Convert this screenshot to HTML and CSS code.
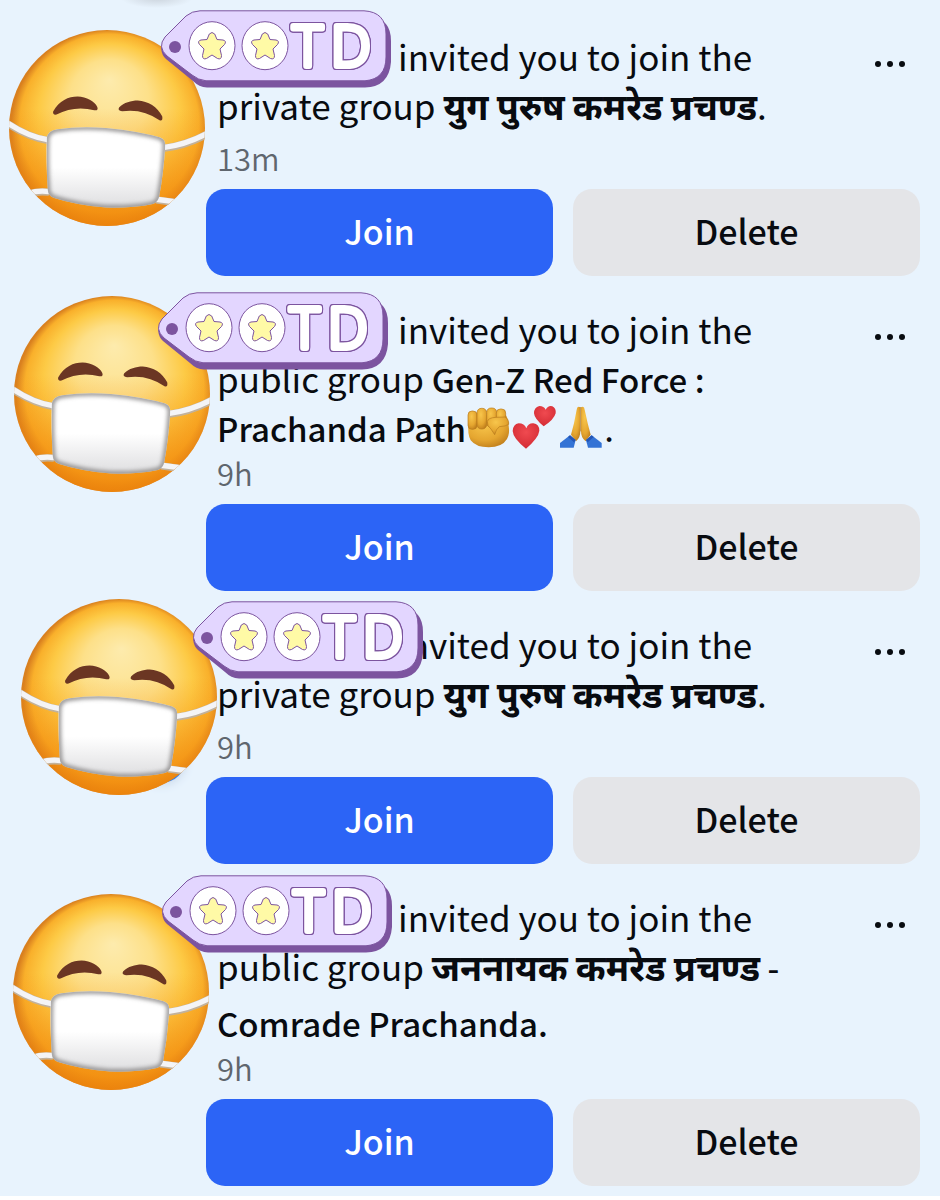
FILE: index.html
```html
<!DOCTYPE html>
<html lang="en">
<head>
<meta charset="utf-8">
<meta name="viewport" content="width=device-width, initial-scale=1">
<title>Group invitations</title>
<link rel="stylesheet" href="styles.css">
</head>
<body>
<svg class="defs" aria-hidden="true">
  <defs>
    <radialGradient id="skin" gradientUnits="userSpaceOnUse" cx="330" cy="385" r="294" fx="330" fy="240">
      <stop offset="0" stop-color="#fdebad"/>
      <stop offset=".4" stop-color="#fde089"/>
      <stop offset=".72" stop-color="#fdca45"/>
      <stop offset=".91" stop-color="#f9b02b"/>
      <stop offset="1" stop-color="#d9801f"/>
    </radialGradient>
    <linearGradient id="chin" x1="0" y1="0" x2="0" y2="1">
      <stop offset=".4" stop-color="#f58a0c" stop-opacity="0"/>
      <stop offset="1" stop-color="#f08408" stop-opacity=".8"/>
    </linearGradient>
    <linearGradient id="cloth" x1="0" y1="0" x2="0" y2="1">
      <stop offset=".5" stop-color="#fff"/>
      <stop offset="1" stop-color="#dedee0"/>
    </linearGradient>
    <radialGradient id="gold" cx=".4" cy=".3" r=".8">
      <stop offset="0" stop-color="#f8c64c"/>
      <stop offset=".6" stop-color="#e5a630"/>
      <stop offset="1" stop-color="#b97718"/>
    </radialGradient>
    <radialGradient id="rose" cx=".5" cy=".35" r=".75">
      <stop offset="0" stop-color="#f04a50"/>
      <stop offset="1" stop-color="#cf2730"/>
    </radialGradient>
    <filter id="soft" x="-10%" y="-10%" width="120%" height="120%"><feGaussianBlur stdDeviation="7"/></filter>
    <clipPath id="head"><circle cx="323" cy="385" r="293"/></clipPath>
    <path id="mask-shape" d="M143 415Q146 393 175 389Q240 379 320 385Q420 395 480 413Q499 419 497 440Q492 520 479 590Q475 608 460 612Q400 625 320 623Q230 615 165 594Q147 588 146 570Q140 480 143 415Z"/>
    <clipPath id="mask-clip"><use href="#mask-shape"/></clipPath>
  </defs>
  <symbol id="face" viewBox="30 92 586 586">
    <circle cx="323" cy="385" r="293" fill="url(#skin)"/>
    <circle cx="323" cy="385" r="293" fill="url(#chin)"/>
    <g fill="#6b3623">
      <path d="M162 336C180 303 208 291 235 291C262 292 286 305 294 322Q298 334 285 332Q225 317 172 345Q160 347 162 336Z"/>
      <path d="M359 324C374 309 395 303 415 303C446 305 474 322 488 350Q491 365 480 362Q430 326 368 335Q354 334 359 324Z"/>
    </g>
    <g clip-path="url(#head)" fill="none">
      <g stroke="#c2b29c" stroke-width="22">
        <path d="M20 368Q85 412 145 422M495 445Q560 437 625 402M90 582Q115 573 150 577M470 600L530 608"/>
      </g>
      <g stroke="#f4f4f6" stroke-width="16">
        <path d="M20 366Q85 410 145 420M495 443Q560 435 625 400M90 580Q115 571 150 575M470 598L530 606"/>
      </g>
    </g>
    <use href="#mask-shape" fill="url(#cloth)"/>
    <g clip-path="url(#mask-clip)">
      <use href="#mask-shape" fill="none" stroke="#8d8b8b" stroke-width="14" filter="url(#soft)"/>
    </g>
  </symbol>
  <symbol id="tag" viewBox="0 0 232 78">
    <path d="M44 7H211Q231 9 231 31V52Q229 77 205 77.500H47Q39 77 33 71L6 49Q2 46 1 38L30 20Z" fill="#7c549f"/>
    <path d="M40 .8H204Q226 2 226 24V47Q226 69 205 70.800H46Q38 70 32 65L7 46Q-3 37 5 27L26 6Q32 1 40 .8Z" fill="#e3d6ff" stroke="#7c549f"/>
    <circle cx="15" cy="37" r="6" fill="#7c549f"/>
    <g stroke="#7c549f" stroke-linejoin="round">
      <g id="medal">
        <ellipse cx="52" cy="35.700" rx="23" ry="24" fill="#fff"/>
        <path transform="translate(52 36)" d="M-2.700-12Q0-15 2.700-12L5-6.500L11-6Q15-5 12.500-1.500L8 3L9.500 9.500Q9.500 14 5.500 12.500L0 9L-5.500 12.500Q-9.500 14-9.500 9.500L-8 3L-12.500-1.500Q-15-5-11-6L-5-6.500Z" fill="#fffaa6"/>
      </g>
      <use href="#medal" x="53"/>
    </g>
  </symbol>
  <symbol id="dots" viewBox="0 0 32 8">
    <circle cx="4" cy="4" r="3"/><circle cx="16" cy="4" r="3"/><circle cx="28" cy="4" r="3"/>
  </symbol>
</svg>

<main class="feed">
  <article class="invite invite--first">
    <div class="avatar"><svg class="face" role="img" aria-label="Masked face"><use href="#face"/></svg></div>
    <div class="body">
      <div class="head">
        <p class="text"><span class="name"><svg class="tag" viewBox="0 0 232 78"><use href="#tag"/><text class="letters" y="56"><tspan x="133">T</tspan><tspan x="171">D</tspan></text></svg></span>invited you to join the private group <b class="hindi">युग पुरुष कमरेड प्रचण्ड</b>.</p>
        <button class="menu" type="button" aria-label="More options"><svg><use href="#dots"/></svg></button>
      </div>
      <time class="time">13m</time>
      <div class="actions"><button class="btn btn--join" type="button">Join</button><button class="btn" type="button">Delete</button></div>
    </div>
  </article>

  <article class="invite invite--second">
    <div class="avatar"><svg class="face" role="img" aria-label="Masked face"><use href="#face"/></svg></div>
    <div class="body">
      <div class="head">
        <p class="text"><span class="name"><svg class="tag" viewBox="0 0 232 78"><use href="#tag"/><text class="letters" y="56"><tspan x="133">T</tspan><tspan x="171">D</tspan></text></svg></span>invited you to join the public group <b>Gen-Z Red Force : Prachanda Path</b><span class="emojis"><svg viewBox="210 313 138 138" role="img" aria-label="Raised fist">
            <path d="M217 365Q214 405 224 422Q240 443 278 443Q318 443 333 418Q342 402 338 378Q336 350 327 345L225 348Z" fill="url(#gold)"/>
            <g fill="url(#gold)" stroke="#b87a1c" stroke-width="2">
              <rect x="216" y="334" width="27" height="55" rx="12"/><rect x="243" y="326" width="29" height="62" rx="13"/><rect x="272" y="325" width="30" height="58" rx="13"/><rect x="301" y="328" width="28" height="50" rx="12"/>
              <path d="M274 366Q276 354 300 353L327 352Q339 358 338 374Q330 380 310 381Q300 388 296 405Q284 385 276 378Z"/>
            </g>
          </svg><svg viewBox="348 313 138 138" role="img" aria-label="Two hearts">
            <path d="M391 386Q397 370 412 371Q430 374 430 393Q428 414 390 447Q351 416 350 394Q351 374 368 371Q385 371 391 386Z" fill="url(#rose)"/>
            <path d="M449 330Q457 316 469 320Q481 326 479 341Q474 360 443 380Q415 357 414 341Q414 323 430 319Q444 319 449 330Z" fill="url(#rose)"/>
          </svg><svg viewBox="484 313 138 138" role="img" aria-label="Folded hands">
            <path d="M551 323Q541 318 540 330L532 371L523 405L538 425Q551 415 551 395Z" fill="url(#gold)"/>
            <path d="M553 323Q563 318 564 330L573 371L582 405L567 425Q553 415 553 395Z" fill="url(#gold)"/>
            <path d="M552 322V395" stroke="#a96c16" stroke-width="2"/>
            <path d="M490 430L520 407L537 421L531 444H490Z" fill="#3473d5"/><path d="M615 430L585 407L568 421L574 444H615Z" fill="#3473d5"/>
            <path d="M520 407L537 421L532 428L514 412ZM585 407L568 421L573 428L591 412Z" fill="#2455b5"/>
          </svg></span>.</p>
        <button class="menu" type="button" aria-label="More options"><svg><use href="#dots"/></svg></button>
      </div>
      <time class="time">9h</time>
      <div class="actions"><button class="btn btn--join" type="button">Join</button><button class="btn" type="button">Delete</button></div>
    </div>
  </article>

  <article class="invite invite--third">
    <div class="avatar"><span class="badge"></span><svg class="face" role="img" aria-label="Masked face"><use href="#face"/></svg></div>
    <div class="body">
      <div class="head">
        <p class="text"><span class="name"><svg class="tag" viewBox="0 0 232 78"><use href="#tag"/><text class="letters" y="56"><tspan x="133">T</tspan><tspan x="171">D</tspan></text></svg></span>invited you to join the private group <b class="hindi">युग पुरुष कमरेड प्रचण्ड</b>.</p>
        <button class="menu" type="button" aria-label="More options"><svg><use href="#dots"/></svg></button>
      </div>
      <time class="time">9h</time>
      <div class="actions"><button class="btn btn--join" type="button">Join</button><button class="btn" type="button">Delete</button></div>
    </div>
  </article>

  <article class="invite invite--fourth">
    <div class="avatar"><svg class="face" role="img" aria-label="Masked face"><use href="#face"/></svg></div>
    <div class="body">
      <div class="head">
        <p class="text"><span class="name"><svg class="tag" viewBox="0 0 232 78"><use href="#tag"/><text class="letters" y="56"><tspan x="133">T</tspan><tspan x="171">D</tspan></text></svg></span>invited you to join the public group <b><span class="hindi">जननायक कमरेड प्रचण्ड</span> - Comrade Prachanda.</b></p>
        <button class="menu" type="button" aria-label="More options"><svg><use href="#dots"/></svg></button>
      </div>
      <time class="time">9h</time>
      <div class="actions"><button class="btn btn--join" type="button">Join</button><button class="btn" type="button">Delete</button></div>
    </div>
  </article>
</main>
</body>
</html>
```
FILE: styles.css
```css
* {
  box-sizing: border-box;
}

body {
  margin: 0;
  background: #fff;
  color: #080b10;
  font-family: "Noto Sans CJK SC", "Noto Sans", "Noto Sans Devanagari", sans-serif;
}

.defs {
  position: absolute;
  width: 0;
  height: 0;
}

.feed {
  display: flex;
  flex-direction: column;
  gap: 28px;
  padding: 31px 20px 10px 0;
  background: radial-gradient(ellipse 36px 10px at 157px -2px, #cbd3dc, transparent) no-repeat, #e8f3fd;
}

.invite {
  display: flex;
}

.avatar {
  position: relative;
  flex: 0 0 206px;
}

.face {
  position: absolute;
  width: 196px;
  height: 196px;
}

.badge {
  position: absolute;
  left: 136px;
  top: 114px;
  width: 50px;
  height: 50px;
  border-radius: 50%;
  background: #2c7ef0;
  box-shadow: 0 2px 10px #c9d8ea;
}

.body {
  flex: 1;
  min-width: 0;
}

.head {
  display: flex;
  align-items: flex-start;
  padding-left: 11px;
}

.text {
  flex: 1;
  margin: 0;
  font-size: 35px;
  line-height: 49px;
}

.text b {
  font-size: 33px;
  font-weight: 500;
  line-height: 44px;
}

.text .hindi {
  display: inline-block;
  padding-bottom: 10px;
  font-size: 36px;
  font-weight: 700;
  line-height: 44px;
}

.name {
  display: inline-block;
  position: relative;
  width: 181px;
  height: 27px;
}

.tag {
  position: absolute;
  z-index: 1;
  width: 232px;
  height: 78px;
  overflow: visible;
}

.letters {
  font: 300 56px "Open Sans", sans-serif;
  fill: #fff;
  stroke: #fff;
  stroke-width: 6px;
  stroke-linejoin: round;
  filter: drop-shadow(1px 0 0 #7c549f) drop-shadow(-1px 0 0 #7c549f) drop-shadow(0 1px 0 #7c549f) drop-shadow(0 -1px 0 #7c549f);
}

.emojis svg {
  width: 46px;
  height: 46px;
  vertical-align: -8px;
}

.menu {
  display: flex;
  flex: 0 0 60px;
  justify-content: center;
  padding: 29px 0 0;
  border: 0;
  background: none;
}

.menu svg {
  width: 32px;
  height: 8px;
  fill: #080b10;
}

.time {
  display: block;
  padding-left: 11px;
  color: #5f666e;
  font-size: 31px;
  font-weight: 350;
  line-height: 44px;
}

.actions {
  display: flex;
  gap: 20px;
  margin-top: 9px;
}

.btn {
  flex: 1;
  height: 87px;
  padding: 0 0 4px;
  border: 0;
  border-radius: 19px;
  background: #e4e5e8;
  color: #080b10;
  font: 500 34px "Noto Sans CJK SC", sans-serif;
}

.btn--join {
  background: #2c64f6;
  color: #fff;
}

.invite--first .face { left: 9px; top: -1px; }
.invite--first .tag { left: -57px; top: -34px; }
.invite--second .face { left: 14px; top: -8px; }
.invite--second .tag { left: -60px; top: -25px; }
.invite--third .face { left: 21px; top: -20px; }
.invite--third .tag { left: -25px; top: -31px; }
.invite--fourth .face { left: 13px; top: 2px; }
.invite--fourth .tag { left: -56px; top: -30px; }
```
